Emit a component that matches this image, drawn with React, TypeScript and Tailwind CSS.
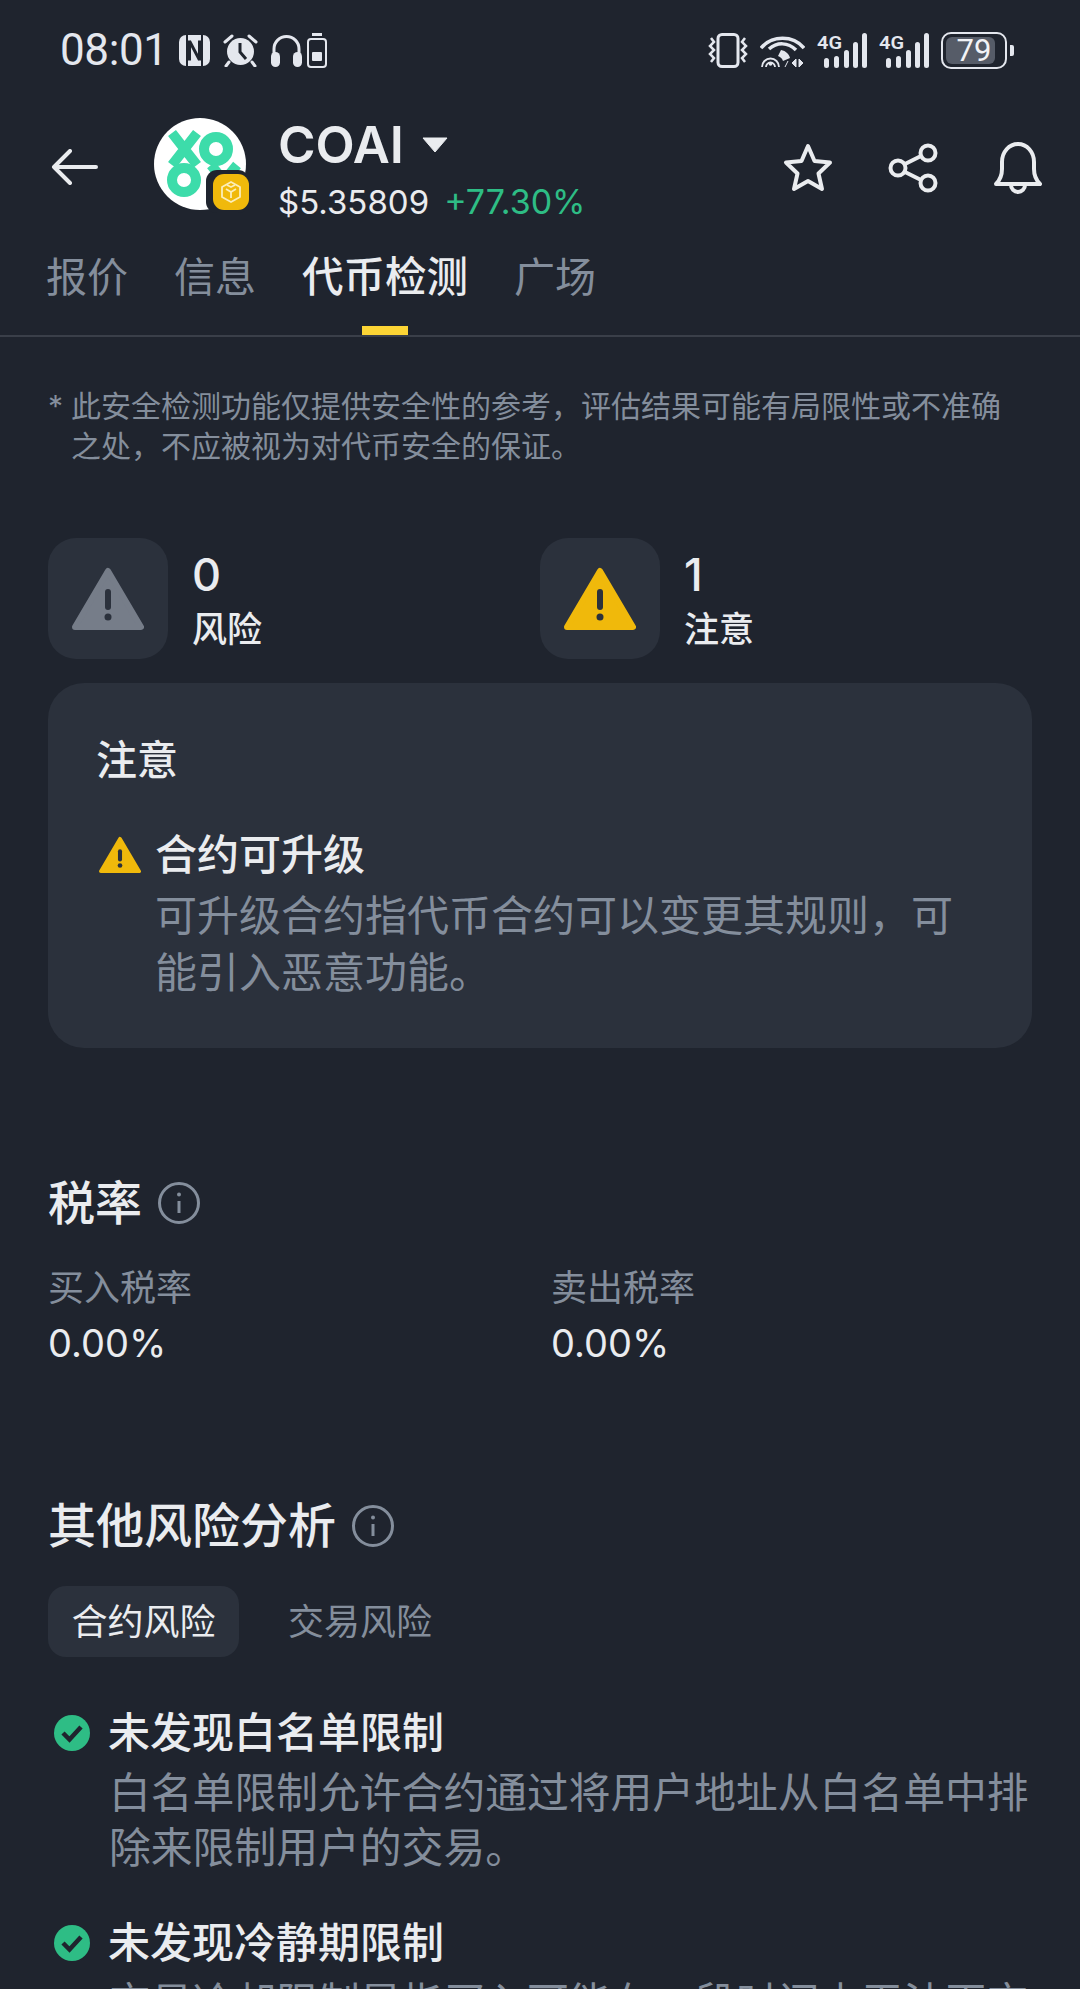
import type { ReactNode } from "react";

const FONT = "font-['Inter','Noto_Sans_CJK_SC',sans-serif]";

function NfcIcon() {
  return (
    <svg width="31" height="33" viewBox="0 0 31 33">
      <rect x="0" y="1" width="31" height="31" rx="7" fill="#e4e7ee" />
      <path d="M8 1v31M23 1v31" stroke="#1f242e" strokeWidth="2" />
      <path d="M10.5 6.5v20M20.5 6.5v20M10.5 7l10 19" stroke="#1f242e" strokeWidth="3" fill="none" />
    </svg>
  );
}

function AlarmIcon() {
  return (
    <svg width="35" height="34" viewBox="0 0 35 34">
      <circle cx="17.5" cy="18.5" r="13.5" fill="#e4e7ee" />
      <path d="M17 10v9l6 7" stroke="#1f242e" strokeWidth="3" fill="none" />
      <path d="M2 9l7-6M33 9l-7-6M6 29l-3 4M29 29l3 4" stroke="#e4e7ee" strokeWidth="3" strokeLinecap="round" />
    </svg>
  );
}

function HeadphoneIcon() {
  return (
    <svg width="31" height="33" viewBox="0 0 31 33">
      <path d="M3 21v-6a12.500 12.500 0 0 1 25 0v6" fill="none" stroke="#e4e7ee" strokeWidth="3" />
      <rect x="0" y="18" width="9" height="15" rx="4.500" fill="#e4e7ee" />
      <rect x="22" y="18" width="9" height="15" rx="4.500" fill="#e4e7ee" />
    </svg>
  );
}

function SmallBattery() {
  return (
    <svg width="20" height="35" viewBox="0 0 20 35">
      <rect x="5" y="0" width="10" height="3" fill="#e4e7ee" />
      <rect x="1" y="6" width="18" height="28" rx="3" fill="none" stroke="#e4e7ee" strokeWidth="2" />
      <rect x="5" y="19" width="10" height="9" rx="1" fill="#e4e7ee" />
    </svg>
  );
}

function VibrateIcon() {
  return (
    <svg width="42" height="35" viewBox="0 0 42 35">
      <rect x="11" y="1.500" width="20" height="32" rx="4" fill="none" stroke="#e4e7ee" strokeWidth="3" />
      <path d="M4 5l3 4-4 4 4 4-4 4 4 4-3 4" fill="none" stroke="#e4e7ee" strokeWidth="2.500" />
      <path d="M38 5l-3 4 4 4-4 4 4 4-4 4 3 4" fill="none" stroke="#e4e7ee" strokeWidth="2.500" />
    </svg>
  );
}

function WifiIcon() {
  return (
    <svg width="45" height="35" viewBox="0 0 45 35">
      <path d="M1 15C12 2 33 2 44 15" fill="none" stroke="#e4e7ee" strokeWidth="3.500" />
      <path d="M9 16c8-7 19-7 27 1" fill="none" stroke="#e4e7ee" strokeWidth="3.500" />
      <path d="M2 34a8.500 8.500 0 1 1 17 0M6 34a4.500 4.500 0 1 1 9 0" fill="none" stroke="#e4e7ee" strokeWidth="1.800" />
      <circle cx="10.500" cy="31" r="1.800" fill="#e4e7ee" />
      <path d="M21 17c5 1 8 4 9 8l-7 3c-1-3-3-4-5-5z" fill="#e4e7ee" />
      <path d="M25 34l3-6M36 26v8l-4-4zM39 26v8l4-4z" fill="#e4e7ee" stroke="#e4e7ee" strokeWidth="1" />
    </svg>
  );
}

function SignalIcon() {
  const bars = [
    { x: 7, h: 10 },
    { x: 17, h: 12 },
    { x: 27, h: 18 },
    { x: 36, h: 26 },
    { x: 45, h: 35 },
  ];
  return (
    <svg width="50" height="35" viewBox="0 0 50 35" className="overflow-visible">
      <text x="0" y="16" fontSize="19" fontWeight="600" fill="#e4e7ee" fontFamily="Roboto, sans-serif" textLength="25" lengthAdjust="spacingAndGlyphs">
        4G
      </text>
      {bars.map((b) => (
        <rect key={b.x} x={b.x} y={35 - b.h} width="5" height={b.h} rx="2.500" fill="#e4e7ee" />
      ))}
    </svg>
  );
}

function BatteryIcon() {
  return (
    <div className="flex items-center gap-[3px]">
      <div className="relative h-[37px] w-[66px] overflow-hidden rounded-[10px] border-[2px] border-[#e4e7ee] p-[3px]">
        <div className="h-full w-[49px] rounded-[6px] bg-[#565c68]" />
        <span className="absolute inset-0 flex items-center justify-center font-['Roboto',sans-serif] text-[31px] leading-none text-[#f2f3f6]">
          79
        </span>
      </div>
      <div className="h-[11px] w-[4px] rounded-r-[2px] bg-[#e4e7ee]" />
    </div>
  );
}

function StatusBar() {
  return (
    <div className="flex h-[100px] items-start justify-between pt-[32px] pl-[60px] pr-[66px]">
      <div className="flex h-[36px] items-center">
        <span className="font-['Roboto',sans-serif] text-[44px] font-normal leading-[36px] tracking-[-0.4px] text-[#e4e7ee]">08:01</span>
        <div className="ml-[11px]"><NfcIcon /></div>
        <div className="ml-[13px]"><AlarmIcon /></div>
        <div className="ml-[13px]"><HeadphoneIcon /></div>
        <div className="ml-[5px]"><SmallBattery /></div>
      </div>
      <div className="flex h-[36px] items-center">
        <VibrateIcon />
        <div className="ml-[11px]"><WifiIcon /></div>
        <div className="ml-[12px]"><SignalIcon /></div>
        <div className="ml-[12px]"><SignalIcon /></div>
        <div className="ml-[12px]"><BatteryIcon /></div>
      </div>
    </div>
  );
}

function CoinLogo() {
  return (
    <div className="relative h-[92px] w-[92px] rounded-full bg-white">
      <svg width="92" height="92" viewBox="0 0 92 92">
        <g stroke="#3ddcaa" strokeWidth="10" fill="none">
          <path d="M18 15l25 32M43 15L18 47" />
          <circle cx="62" cy="31" r="12" />
          <circle cx="30" cy="62" r="12" />
          <path d="M57 47l26 32M83 47L57 79" />
        </g>
      </svg>
      <div className="absolute left-[52px] top-[52px] flex h-[43px] w-[43px] items-center justify-end rounded-[11px] bg-[#1f242e] pl-[6px]">
        <div className="flex h-[36px] w-[36px] items-center justify-center rounded-[11px] bg-[#f0b90b]">
          <svg width="24" height="24" viewBox="0 0 24 24" fill="none" stroke="#fbeeb9" strokeWidth="1.800" strokeLinejoin="round">
            <path d="M12 2l9 5v10l-9 5-9-5V7z" />
            <path d="M7 9l5 3 5-3M12 12v6M8 5l4 2 4-2" />
          </svg>
        </div>
      </div>
    </div>
  );
}

function Header() {
  return (
    <div className="flex h-[120px] items-center pl-[51px] pr-[37px] pt-[8px]">
      <svg width="47" height="36" viewBox="0 0 47 36" fill="none" stroke="#eaecef" strokeWidth="4" strokeLinecap="round" strokeLinejoin="round" className="mr-[56px] mt-[6px]">
        <path d="M45 18H3M19 2L3 18l16 16" />
      </svg>
      <CoinLogo />
      <div className="ml-[32px] mt-[11px] flex flex-1 flex-col">
        <div className="flex h-[56px] items-center">
          <span className="text-[51px] font-semibold leading-[56px] text-[#eaecef]">COAI</span>
          <svg width="26" height="16" viewBox="0 0 26 16" className="ml-[18px]">
            <path d="M1 1h24L13 15z" fill="#eaecef" stroke="#eaecef" strokeLinejoin="round" />
          </svg>
        </div>
        <div className="mt-[9px] flex h-[40px] items-center">
          <span className="text-[33px] leading-[40px] text-[#eaecef]">$5.35809</span>
          <span className="ml-[15px] text-[34px] leading-[40px] text-[#2ebd85]">+77.30%</span>
        </div>
      </div>
      <div className="mt-[8px] flex items-center gap-[55px]">
        <svg width="50" height="50" viewBox="0 0 50 50" fill="none" stroke="#eaecef" strokeWidth="4" strokeLinejoin="round">
          <path d="M25 3l6.500 15L47 19.500 35.500 30.500 39 46 25 38 11 46l3.500-15.500L3 19.500 18.500 18z" />
        </svg>
        <svg width="50" height="50" viewBox="0 0 50 50" fill="none" stroke="#eaecef" strokeWidth="4">
          <circle cx="10" cy="25" r="7.500" />
          <circle cx="40" cy="10" r="7.500" />
          <circle cx="40" cy="40" r="7.500" />
          <path d="M17 21l16-8M17 29l16 8" />
        </svg>
        <svg width="50" height="52" viewBox="0 0 50 52" fill="none" stroke="#eaecef" strokeWidth="4" strokeLinejoin="round">
          <path d="M3 42c4-4 6-8 6-15v-7C9 10 16 2 25 2s16 8 16 18v7c0 7 2 11 6 15z" />
          <path d="M18 43a7 7 0 0 0 14 0" />
        </svg>
      </div>
    </div>
  );
}

function Tabs() {
  const tabs = ["报价", "信息", "代币检测", "广场"];
  return (
    <div className="flex gap-[46px] border-b-[2px] border-[#3a3f49] pl-[46px] pt-[31px]">
      {tabs.map((t, i) => (
        <div key={t} className="flex flex-col items-center">
          <span className={`leading-[52px] ${i === 2 ? "text-[41.500px] font-medium text-[#eaecef]" : "text-[41px] text-[#848e9c]"}`}>{t}</span>
          <div className={`mt-[23px] h-[9px] w-[46px] ${i === 2 ? "bg-[#fcd535]" : "bg-transparent"}`} />
        </div>
      ))}
    </div>
  );
}

function Triangle({ color, width }: { color: string; width: number }) {
  return (
    <svg width={width} viewBox="0 0 72 64">
      <path d="M36 4L69 60H3z" fill={color} stroke={color} strokeWidth="6" strokeLinejoin="round" />
      <rect x="33" y="22" width="6" height="21" rx="3" fill="#2b313c" />
      <circle cx="36" cy="50" r="3.500" fill="#2b313c" />
    </svg>
  );
}

function RiskStat({ count, label, color }: { count: number; label: string; color: string }) {
  return (
    <div className="flex items-center">
      <div className="flex h-[121px] w-[120px] items-center justify-center rounded-[28px] bg-[#2b313c]">
        <Triangle color={color} width={72} />
      </div>
      <div className="ml-[24px] mt-[6px] flex flex-col">
        <span className="text-[45px] font-medium leading-[50px] text-[#eaecef]">{count}</span>
        <span className="mt-[4px] text-[35px] font-medium leading-[50px] text-[#eaecef]">{label}</span>
      </div>
    </div>
  );
}

function InfoIcon({ size }: { size: number }) {
  return (
    <svg width={size} height={size} viewBox="0 0 42 42" fill="none" className="ml-[16px]">
      <circle cx="21" cy="21" r="19.500" stroke="#848e9c" strokeWidth="3" />
      <path d="M21 19v12" stroke="#848e9c" strokeWidth="3" />
      <circle cx="21" cy="12.500" r="2" fill="#848e9c" />
    </svg>
  );
}

function SectionTitle({ children, size }: { children: ReactNode; size: string }) {
  return (
    <div className="flex h-[60px] items-center">
      <span className={`${size} font-medium leading-[60px] text-[#eaecef]`}>{children}</span>
      <InfoIcon size={42} />
    </div>
  );
}

function CheckItem({ title, desc, className }: { title: string; desc: string; className: string }) {
  return (
    <div className={className}>
      <div className="flex h-[56px] items-center">
        <svg width="36" height="36" viewBox="0 0 36 36" className="ml-[6px] mr-[18px]">
          <circle cx="18" cy="18" r="18" fill="#2ebd85" />
          <path d="M9 18l6.500 6.500L27 12" fill="none" stroke="#1f242e" strokeWidth="4.500" />
        </svg>
        <span className="text-[42px] font-medium leading-[56px] text-[#eaecef]">{title}</span>
      </div>
      <p className="mt-[5px] pl-[61px] text-[41.800px] leading-[55px] text-[#848e9c]">{desc}</p>
    </div>
  );
}

export default function App() {
  return (
    <div className={`h-[1989px] w-[1080px] overflow-hidden bg-[#1f242e] ${FONT}`}>
      <StatusBar />
      <Header />
      <Tabs />
      <div className="px-[48px]">
        <div className="mt-[49px] flex text-[30px] leading-[40px] text-[#848e9c]">
          <span className="w-[23px] shrink-0">*</span>
          <p className="w-[940px]">此安全检测功能仅提供安全性的参考，评估结果可能有局限性或不准确之处，不应被视为对代币安全的保证。</p>
        </div>
        <div className="mt-[72px] grid grid-cols-2">
          <RiskStat count={0} label="风险" color="#767d89" />
          <RiskStat count={1} label="注意" color="#f0b90b" />
        </div>
        <div className="mt-[24px] h-[365px] rounded-[36px] bg-[#2b313c] pl-[48px] pr-[50px] pt-[49px]">
          <div className="text-[41px] font-medium leading-[56px] text-[#eaecef]">注意</div>
          <div className="mt-[39px] flex h-[56px] items-center">
            <svg width="42" height="38" viewBox="0 0 72 64" className="ml-[3px] mr-[14px]">
              <path d="M36 4L69 60H3z" fill="#f0b90b" stroke="#f0b90b" strokeWidth="6" strokeLinejoin="round" />
              <rect x="32.500" y="22" width="7" height="21" rx="3.500" fill="#2b313c" />
              <circle cx="36" cy="50" r="4" fill="#2b313c" />
            </svg>
            <span className="text-[42px] font-medium leading-[56px] text-[#eaecef]">合约可升级</span>
          </div>
          <p className="mt-[4px] pl-[59px] text-[42px] leading-[57px] text-[#848e9c]">可升级合约指代币合约可以变更其规则，可能引入恶意功能。</p>
        </div>
        <div className="mt-[125px]">
          <SectionTitle size="text-[47px]">税率</SectionTitle>
        </div>
        <div className="mt-[33px] flex">
          <div className="w-[503px]">
            <div className="text-[36px] leading-[44px] text-[#848e9c]">买入税率</div>
            <div className="mt-[11px] text-[38px] leading-[44px] text-[#eaecef]">0.00%</div>
          </div>
          <div>
            <div className="text-[36px] leading-[44px] text-[#848e9c]">卖出税率</div>
            <div className="mt-[11px] text-[38px] leading-[44px] text-[#eaecef]">0.00%</div>
          </div>
        </div>
        <div className="mt-[131px]">
          <SectionTitle size="text-[48px]">其他风险分析</SectionTitle>
        </div>
        <div className="mt-[30px] flex items-center">
          <div className="flex h-[71px] w-[191px] items-center justify-center rounded-[18px] bg-[#2b313c] text-[36px] text-[#eaecef]">合约风险</div>
          <div className="ml-[49px] text-[36px] text-[#848e9c]">交易风险</div>
        </div>
        <CheckItem className="mt-[48px]" title="未发现白名单限制" desc="白名单限制允许合约通过将用户地址从白名单中排除来限制用户的交易。" />
        <CheckItem className="mt-[39px]" title="未发现冷静期限制" desc="交易冷却限制是指买入可能在一段时间内无法再交易。" />
      </div>
    </div>
  );
}
